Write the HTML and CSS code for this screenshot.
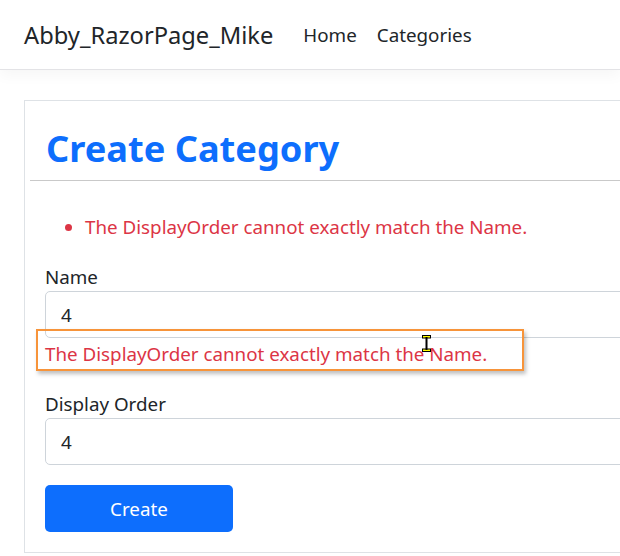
FILE: index.html
```html
<!DOCTYPE html>
<html lang="en">
<head>
<meta charset="utf-8">
<title>Create Category</title>
<link rel="stylesheet" href="styles.css">
</head>
<body>
<header class="navbar">
  <a class="brand" href="#">Abby_RazorPage_Mike</a>
  <nav class="nav">
    <a class="nav-link" href="#">Home</a>
    <a class="nav-link" href="#">Categories</a>
  </nav>
</header>
<main class="container">
  <form class="card">
    <h2 class="title">Create Category</h2>
    <hr class="divider">
    <ul class="summary">
      <li>The DisplayOrder cannot exactly match the Name.</li>
    </ul>
    <div class="field">
      <label class="label">Name</label>
      <input class="input" type="text" value="4">
      <div class="error-wrap">
        <span class="error">The DisplayOrder cannot exactly match the Name.</span>
        <svg class="cursor" width="9" height="17" viewBox="0 0 9 17">
          <rect x="0.5" y="0.5" width="8" height="2.5" fill="#ffff00" stroke="#000" stroke-width="1"/>
          <rect x="0.5" y="14" width="8" height="2.5" fill="#ffff00" stroke="#000" stroke-width="1"/>
          <rect x="3.5" y="2" width="2" height="13" fill="#000"/>
        </svg>
      </div>
    </div>
    <div class="field field-2">
      <label class="label">Display Order</label>
      <input class="input" type="text" value="4">
    </div>
    <button class="btn" type="button">Create</button>
  </form>
</main>
</body>
</html>
```
FILE: styles.css
```css
html, body {
  margin: 0;
  padding: 0;
  background: #fff;
  overflow: hidden;
}
body {
  font-family: "Noto Sans", "Open Sans", sans-serif;
  color: #212529;
  font-size: 18.8px;
}
.navbar {
  height: 70px;
  box-sizing: border-box;
  display: flex;
  align-items: center;
  padding-left: 24px;
  border-bottom: 1px solid #e3e3e6;
  box-shadow: 0 5px 14px rgba(0, 0, 0, 0.04);
  position: relative;
}
.brand {
  font-size: 23.7px;
  color: #212529;
  text-decoration: none;
  margin-right: 30px;
}
.nav {
  display: flex;
  gap: 20px;
}
.nav-link {
  font-size: 18.8px;
  color: #212529;
  text-decoration: none;
}
.container {
  padding: 30px 0 0 24px;
}
.card {
  border: 1px solid #dee2e6;
  margin-right: -40px;
  padding: 0 0 20px 0;
}
.title {
  margin: 0;
  padding: 23px 0 8px 21px;
  font-size: 36.2px;
  font-weight: 700;
  color: #0d6efd;
  line-height: 48px;
}
.divider {
  margin: 0 0 0 5px;
  border: 0;
  border-top: 1px solid #c9c9c9;
}
.summary {
  margin: 0;
  padding: 33px 0 0 60px;
  color: #dc3545;
  font-size: 18.8px;
  line-height: 26px;
}
.field {
  padding: 0 0 0 20px;
  margin-top: 24px;
}
.label {
  display: block;
  font-size: 18.8px;
  line-height: 26px;
  margin-bottom: 1px;
}
.input {
  display: block;
  box-sizing: border-box;
  width: 700px;
  height: 47px;
  border: 1px solid #ced4da;
  border-radius: 5px;
  padding: 0 15px;
  font-family: inherit;
  font-size: 18.8px;
  color: #212529;
}
.error-wrap {
  position: relative;
  height: 34px;
  padding-top: 1px;
}
.error {
  color: #dc3545;
  font-size: 18.8px;
  line-height: 30px;
}
.error-wrap::before {
  content: "";
  position: absolute;
  left: -9px;
  top: -9px;
  width: 484px;
  height: 38px;
  border: 2px solid #f7943a;
  box-shadow: 2px 3px 4px rgba(0, 0, 0, 0.25);
}
.cursor {
  position: absolute;
  left: 377px;
  top: -3px;
}
.field-2 {
  margin-top: 18px;
}
.btn {
  display: block;
  margin: 20px 0 0 20px;
  width: 188px;
  height: 47px;
  border: 0;
  border-radius: 5px;
  background: #0d6efd;
  color: #fff;
  font-family: inherit;
  font-size: 18.8px;
}
```
